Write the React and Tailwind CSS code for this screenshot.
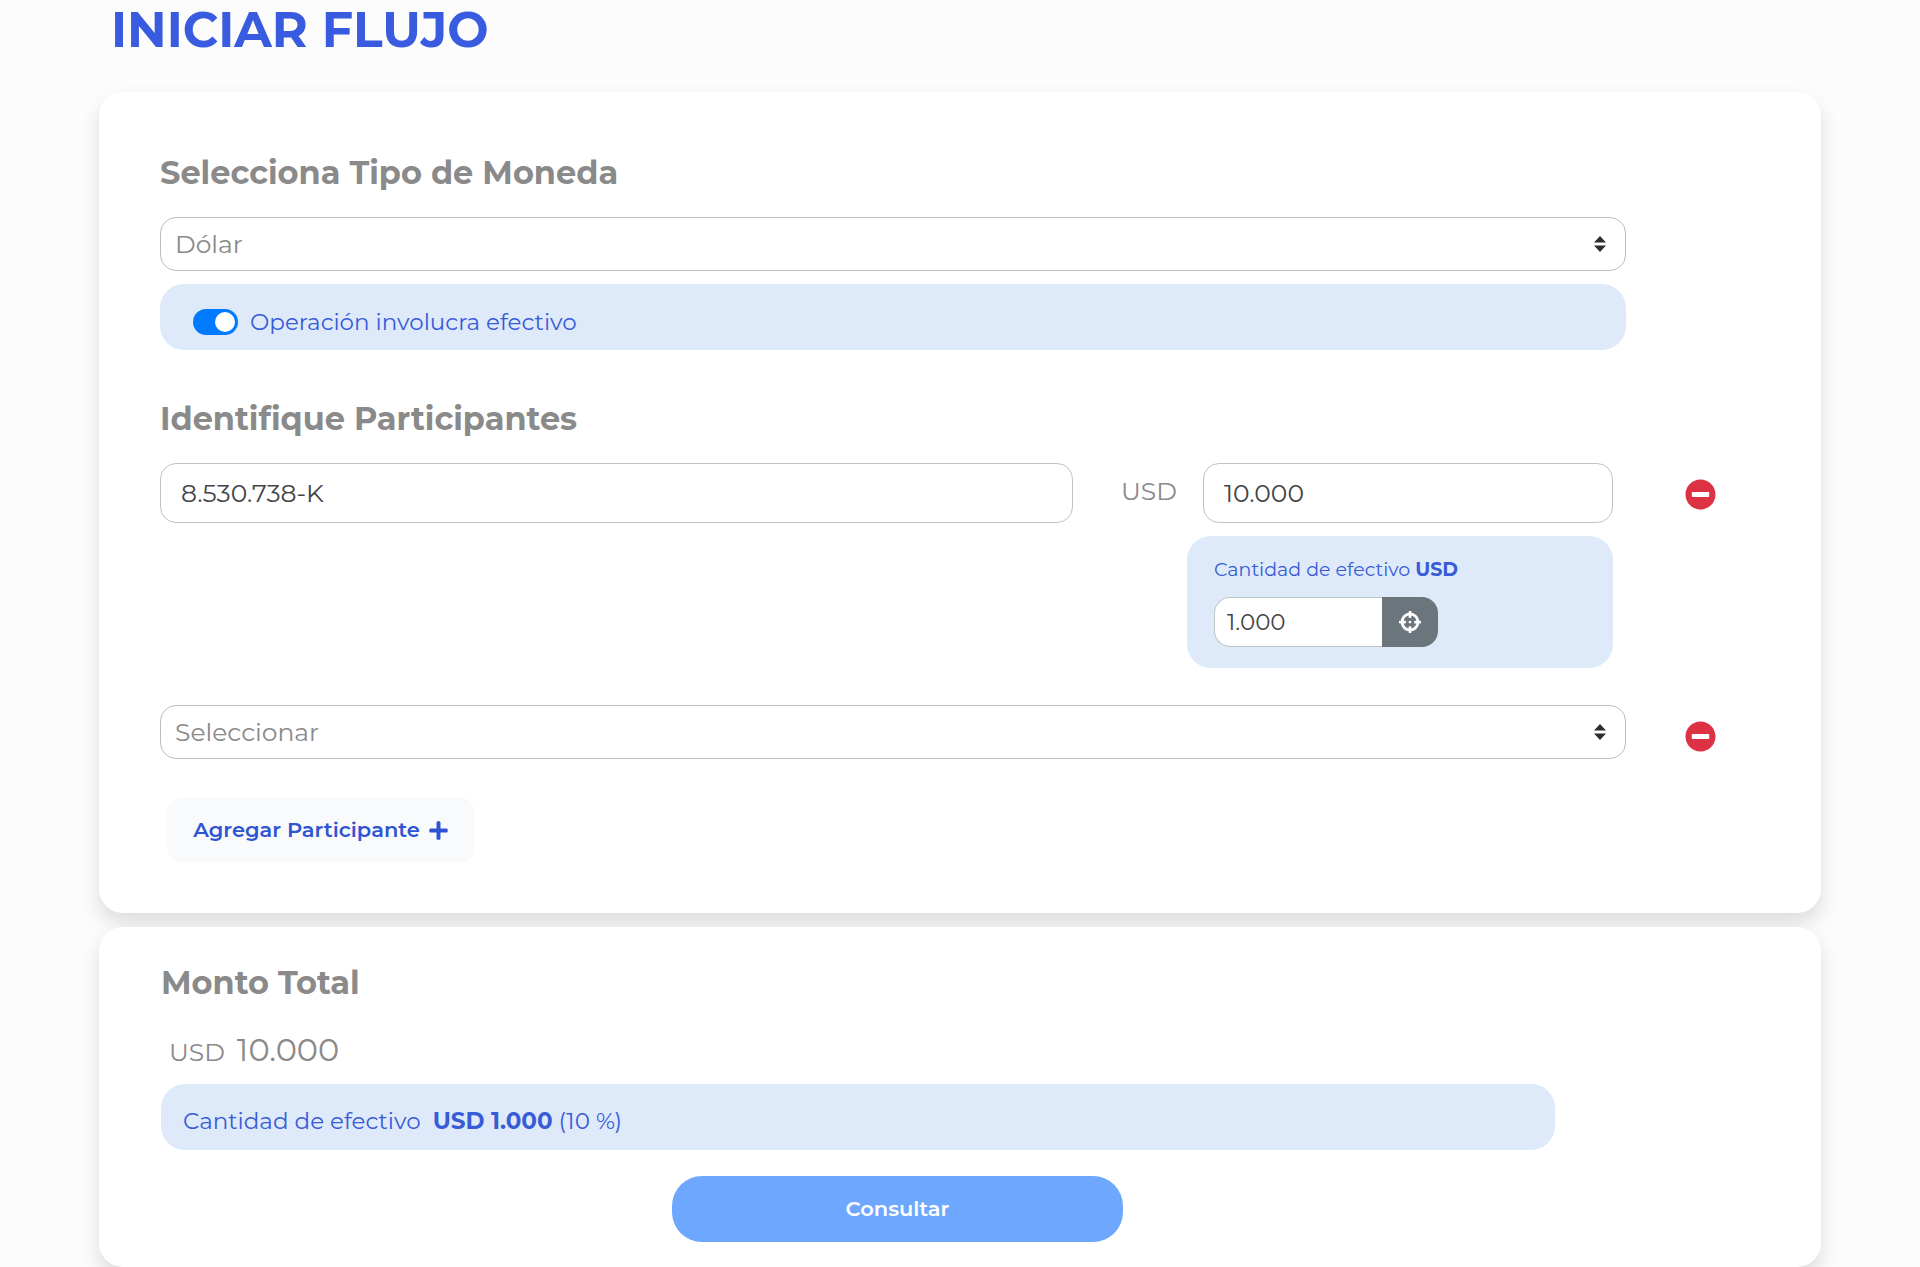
import { useState } from 'react';
import { FaCrosshairs, FaMinusCircle, FaPlus } from 'react-icons/fa';

const Card = ({ className, children }) => (
    <section className={`bg-white rounded-3xl shadow-[0_10px_20px_rgba(0,0,0,0.13)] ${className}`}>
        {children}
    </section>
);

const SectionTitle = ({ children }) => (
    <h2 className="text-[32px] leading-10 font-bold text-[#8a8a8a]">{children}</h2>
);

const Select = ({ label, options }) => (
    <div className="relative">
        <select
            aria-label={label}
            className="block w-full h-[54px] pl-3.5 pr-12 appearance-none bg-white border border-[#bdbdbd] rounded-2xl text-[25px] leading-8 text-[#8a8a8a]"
        >
            {options.map((option) => (
                <option key={option}>{option}</option>
            ))}
        </select>
        <svg
            viewBox="0 0 4 5"
            className="absolute right-5 top-1/2 -translate-y-1/2 w-3 h-4 pointer-events-none"
            preserveAspectRatio="none"
            fill="#292d31"
        >
            <path d="M2 0L0 2h4zm0 5L0 3h4z" />
        </svg>
    </div>
);

const RemoveButton = () => (
    <button type="button" aria-label="Eliminar participante" className="ml-[59px] text-[#dc3244]">
        <FaMinusCircle size={31} />
    </button>
);

const App = () => {
    const [cash, setCash] = useState(true);

    return (
        <div className="min-h-screen bg-[#fcfcfc] px-[99px] pt-1.5 font-[Montserrat,Inter,sans-serif]">
            <h1 className="pl-3 mb-[38px] text-[49px] leading-[48px] font-bold text-[#385be0]">INICIAR FLUJO</h1>

            <Card className="pl-[61px] pt-[61px] pb-[50px]">
                {/* Currency */}
                <div className="mr-[195px]">
                    <SectionTitle>Selecciona Tipo de Moneda</SectionTitle>
                    <div className="mt-6">
                        <Select label="Tipo de moneda" options={['Dólar', 'Peso']} />
                    </div>
                    <label className="mt-[13px] h-[66px] pl-[33px] pt-2.5 flex items-center gap-3 bg-[#deeafa] rounded-3xl text-[23px] text-[#385bd6]">
                        <input
                            type="checkbox"
                            role="switch"
                            checked={cash}
                            onChange={(e) => setCash(e.target.checked)}
                            className="peer sr-only"
                        />
                        <span className="w-[45px] h-[26px] p-[3px] flex rounded-full bg-gray-400 peer-checked:bg-[#007bff] peer-checked:justify-end">
                            <span className="w-5 h-5 rounded-full bg-white" />
                        </span>
                        Operación involucra efectivo
                    </label>
                </div>

                {/* Participants */}
                <div className="mt-[49px]">
                    <SectionTitle>Identifique Participantes</SectionTitle>
                </div>
                <div className="mt-6 grid grid-cols-[1fr_195px]">
                    <div className="flex items-start pr-[13px]">
                        <input
                            aria-label="RUT"
                            defaultValue="8.530.738-K"
                            className="flex-1 min-w-0 h-[60px] px-5 border border-[#bfc4c4] rounded-2xl text-[25px] text-[#424547]"
                        />
                        <div className="w-[540px]">
                            <div className="flex items-center">
                                <label htmlFor="amount" className="w-[130px] pl-12 pb-1 text-[25px] leading-8 text-[#8a8a8a]">
                                    USD
                                </label>
                                <input
                                    id="amount"
                                    defaultValue="10.000"
                                    className="flex-1 min-w-0 h-[60px] px-5 border border-[#bfc4c4] rounded-2xl text-[25px] text-[#424547]"
                                />
                            </div>
                            <div className="mt-[13px] ml-[114px] h-[132px] px-[27px] pt-5 bg-[#deeafa] rounded-3xl">
                                <label htmlFor="cash" className="block text-[19px] leading-7 text-[#385bd6]">
                                    Cantidad de efectivo <strong>USD</strong>
                                </label>
                                <div className="mt-[13px] flex">
                                    <input
                                        id="cash"
                                        defaultValue="1.000"
                                        className="w-[168px] h-[50px] px-3 bg-white border border-r-0 border-[#bfc4c4] rounded-l-2xl text-[23px] text-[#424547]"
                                    />
                                    <button
                                        type="button"
                                        aria-label="Usar monto total"
                                        className="w-14 h-[50px] flex items-center justify-center bg-[#6a757c] rounded-r-2xl text-white"
                                    >
                                        <FaCrosshairs size={22} />
                                    </button>
                                </div>
                            </div>
                        </div>
                    </div>
                    <div className="pt-4">
                        <RemoveButton />
                    </div>
                </div>

                <div className="mt-[37px] grid grid-cols-[1fr_195px]">
                    <Select label="Participante" options={['Seleccionar']} />
                    <div className="pt-4">
                        <RemoveButton />
                    </div>
                </div>

                <button
                    type="button"
                    className="mt-[38px] ml-[7px] w-[308px] h-[66px] flex items-center justify-center gap-2 bg-[#f8fafc] rounded-2xl text-[21px] font-semibold text-[#2f54d3]"
                >
                    Agregar Participante
                    <FaPlus size={21} />
                </button>
            </Card>

            <Card className="mt-3.5 pl-[62px] pr-[187px] pt-9 pb-[25px]">
                <SectionTitle>Monto Total</SectionTitle>
                <p className="mt-[27px] pl-2 flex items-baseline gap-3 text-[32px] leading-10 text-[#8a8a8a]">
                    <span className="text-[25px]">USD</span>
                    10.000
                </p>
                <p className="mt-3 mr-[79px] h-[66px] pl-[22px] pt-2 flex items-center bg-[#deeafa] rounded-3xl text-[23px] text-[#385bd6] whitespace-pre">
                    Cantidad de efectivo <strong className="ml-1.5">USD 1.000</strong> (10 %)
                </p>
                <button
                    type="button"
                    className="mt-[26px] mx-auto w-[451px] h-[66px] block bg-[#6ea8fe] rounded-[30px] text-[21px] font-semibold text-white"
                >
                    Consultar
                </button>
            </Card>
        </div>
    );
};

export default App;
